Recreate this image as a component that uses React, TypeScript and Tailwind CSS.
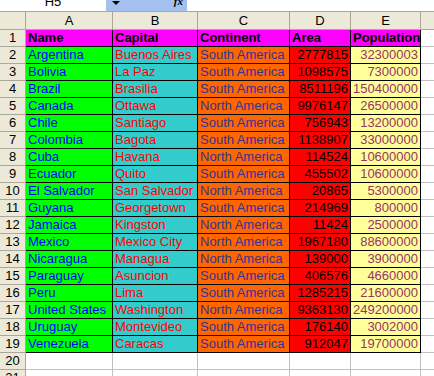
import React from 'react'

const rows = [
  ['Argentina', 'Buenos Aires', 'South America', '2777815', '32300003'],
  ['Bolivia', 'La Paz', 'South America', '1098575', '7300000'],
  ['Brazil', 'Brasilia', 'South America', '8511196', '150400000'],
  ['Canada', 'Ottawa', 'North America', '9976147', '26500000'],
  ['Chile', 'Santiago', 'South America', '756943', '13200000'],
  ['Colombia', 'Bagota', 'South America', '1138907', '33000000'],
  ['Cuba', 'Havana', 'North America', '114524', '10600000'],
  ['Ecuador', 'Quito', 'South America', '455502', '10600000'],
  ['El Salvador', 'San Salvador', 'North America', '20865', '5300000'],
  ['Guyana', 'Georgetown', 'South America', '214969', '800000'],
  ['Jamaica', 'Kingston', 'North America', '11424', '2500000'],
  ['Mexico', 'Mexico City', 'North America', '1967180', '88600000'],
  ['Nicaragua', 'Managua', 'North America', '139000', '3900000'],
  ['Paraguay', 'Asuncion', 'South America', '406576', '4660000'],
  ['Peru', 'Lima', 'South America', '1285215', '21600000'],
  ['United States', 'Washington', 'North America', '9363130', '249200000'],
  ['Uruguay', 'Montevideo', 'South America', '176140', '3002000'],
  ['Venezuela', 'Caracas', 'South America', '912047', '19700000'],
]

const headers = ['Name', 'Capital', 'Continent', 'Area', 'Population']

const cellStyle = [
  'bg-[#00ff00] text-[#0000ff]',
  'bg-[#33cccc] text-[#ff0000]',
  'bg-[#ff6600] text-[#333399]',
  'bg-[#ff0000] text-black text-right',
  'bg-[#ffff99] text-[#993366] text-right',
]

const grid = 'grid grid-cols-[26px_87px_85px_92px_61px_70px_1fr]'
const hdr = 'bg-[#ece9d8] border-r border-b border-[#aca899] text-center text-black'

export default function App() {
  return (
    <div className="w-[434px] h-[376px] overflow-hidden bg-white text-[13px] font-['Liberation_Sans',Arial,sans-serif]">
      {/* formula bar, mostly scrolled out */}
      <div className="flex h-[11px] overflow-hidden border-b border-[#aca899] box-content">
        <div className="w-[106px] text-center leading-[11px] -mt-[4px] text-black">H5</div>
        <div className="w-[81px] bg-[#a4c0ee] flex items-start justify-between pl-[6px] pr-[4px]">
          <span className="block w-0 h-0 mt-[1px] border-l-[4px] border-r-[4px] border-t-[4px] border-l-transparent border-r-transparent border-t-black" />
          <span className="italic font-bold text-[11px] leading-[11px] -mt-[4px] font-['Liberation_Serif',serif]">fx</span>
        </div>
        <div className="flex-1" />
      </div>

      {/* column headers */}
      <div className={`${grid} h-[18px]`}>
        <div className={hdr} />
        {['A', 'B', 'C', 'D', 'E'].map(c => (
          <div key={c} className={`${hdr} leading-[17px]`}>{c}</div>
        ))}
        <div className="bg-[#ece9d8] border-b border-[#aca899]" />
      </div>

      {/* header row 1 */}
      <div className={`${grid} h-[17px]`}>
        <div className={`${hdr} leading-[16px]`}>1</div>
        {headers.map(h => (
          <div key={h} className="bg-[#ff00ff] border-r border-b border-black font-bold leading-[16px] pl-[2px] whitespace-nowrap overflow-hidden">{h}</div>
        ))}
        <div className="border-b border-[#c0c0c0]" />
      </div>

      {rows.map((r, i) => (
        <div key={r[0]} className={`${grid} h-[17px]`}>
          <div className={`${hdr} leading-[16px]`}>{i + 2}</div>
          {r.map((v, j) => (
            <div key={j} className={`${cellStyle[j]} border-r border-b border-black leading-[16px] px-[2px] whitespace-nowrap overflow-hidden`}>{v}</div>
          ))}
          <div className="border-b border-[#c0c0c0]" />
        </div>
      ))}

      {[20, 21].map(n => (
        <div key={n} className={`${grid} h-[17px]`}>
          <div className={`${hdr} leading-[16px]`}>{n}</div>
          {[0, 1, 2, 3, 4].map(j => (
            <div key={j} className="border-r border-b border-[#c0c0c0]" />
          ))}
          <div className="border-b border-[#c0c0c0]" />
        </div>
      ))}
    </div>
  )
}
